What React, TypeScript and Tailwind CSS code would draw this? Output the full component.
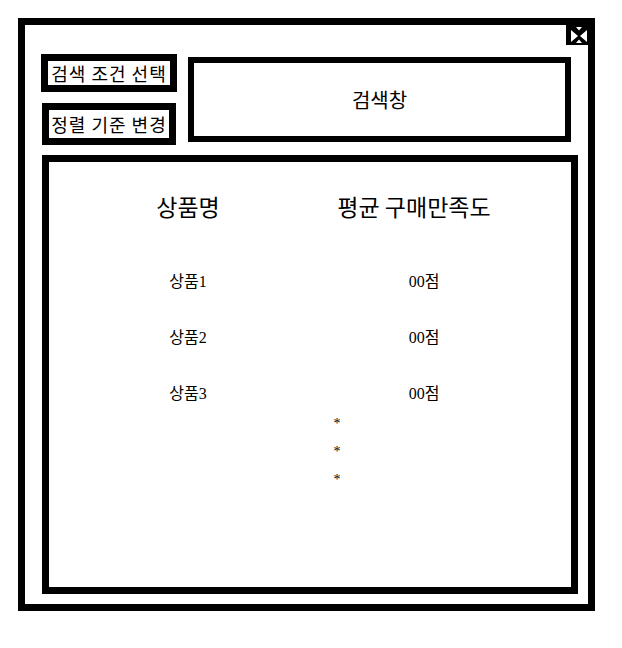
import React from 'react';

const sans = { fontFamily: '"Noto Sans CJK KR", "Noto Sans", sans-serif' };
const serif = { fontFamily: '"Liberation Serif", "Noto Sans CJK KR", serif' };

const rows = [
  { name: '상품1', score: '00점' },
  { name: '상품2', score: '00점' },
  { name: '상품3', score: '00점' },
];

const CloseIcon: React.FC = () => (
  <svg width="22" height="20" viewBox="0 0 22 20" className="block">
    <rect width="22" height="20" fill="#000" />
    <polygon points="5,5 5,17 12,11" fill="#fff" />
    <polygon points="21,5 21,17 14,11" fill="#fff" />
    <polygon points="10,2 16,2 13,5.5" fill="#fff" />
    <polygon points="10,18 16,18 13,14.5" fill="#fff" />
  </svg>
);

const App: React.FC = () => {
  return (
    <div className="w-[622px] h-[648px] bg-white pt-[18px] pl-[18px]" style={sans}>
      <div className="relative w-[577px] h-[593px] border-[7px] border-black">
        <button className="absolute top-0 right-0" title="닫기">
          <CloseIcon />
        </button>

        <div className="flex mt-[29px] ml-[16px]">
          <div className="flex flex-col gap-[11px]">
            <div className="w-[136px] h-[38px] border-[7px] border-black flex items-center justify-center text-[18px] tracking-[1px] leading-none text-black whitespace-nowrap">
              검색 조건 선택
            </div>
            <div className="ml-px w-[134px] h-[42px] border-[7px] border-black flex items-center justify-center text-[18px] tracking-[1px] leading-none text-black whitespace-nowrap">
              정렬 기준 변경
            </div>
          </div>
          <div className="ml-[11px] mt-[3px] w-[383px] h-[85px] border-[6px] border-black flex items-center justify-center text-[20px] text-black">
            검색창
          </div>
        </div>

        <div className="mt-[10px] ml-[17px] w-[536px] h-[439px] border-[7px] border-black">
          <div className="flex pt-[30px] text-[23px] leading-[28px] text-black">
            <div className="w-[278px] text-center">상품명</div>
            <div className="w-[174px] text-center">평균 구매만족도</div>
          </div>

          <div className="flex flex-col gap-[32px] mt-[50px] text-[16px] leading-[24px] text-black" style={serif}>
            {rows.map((r) => (
              <div key={r.name} className="flex">
                <div className="w-[278px] text-center">{r.name}</div>
                <div className="w-[194px] text-center">{r.score}</div>
              </div>
            ))}
          </div>

          <div className="mt-[4px] ml-[278px] w-[20px] text-center text-[14px] leading-[28px] text-black" style={serif}>
            <div>*</div>
            <div>*</div>
            <div>*</div>
          </div>
        </div>
      </div>
    </div>
  );
};

export default App;
